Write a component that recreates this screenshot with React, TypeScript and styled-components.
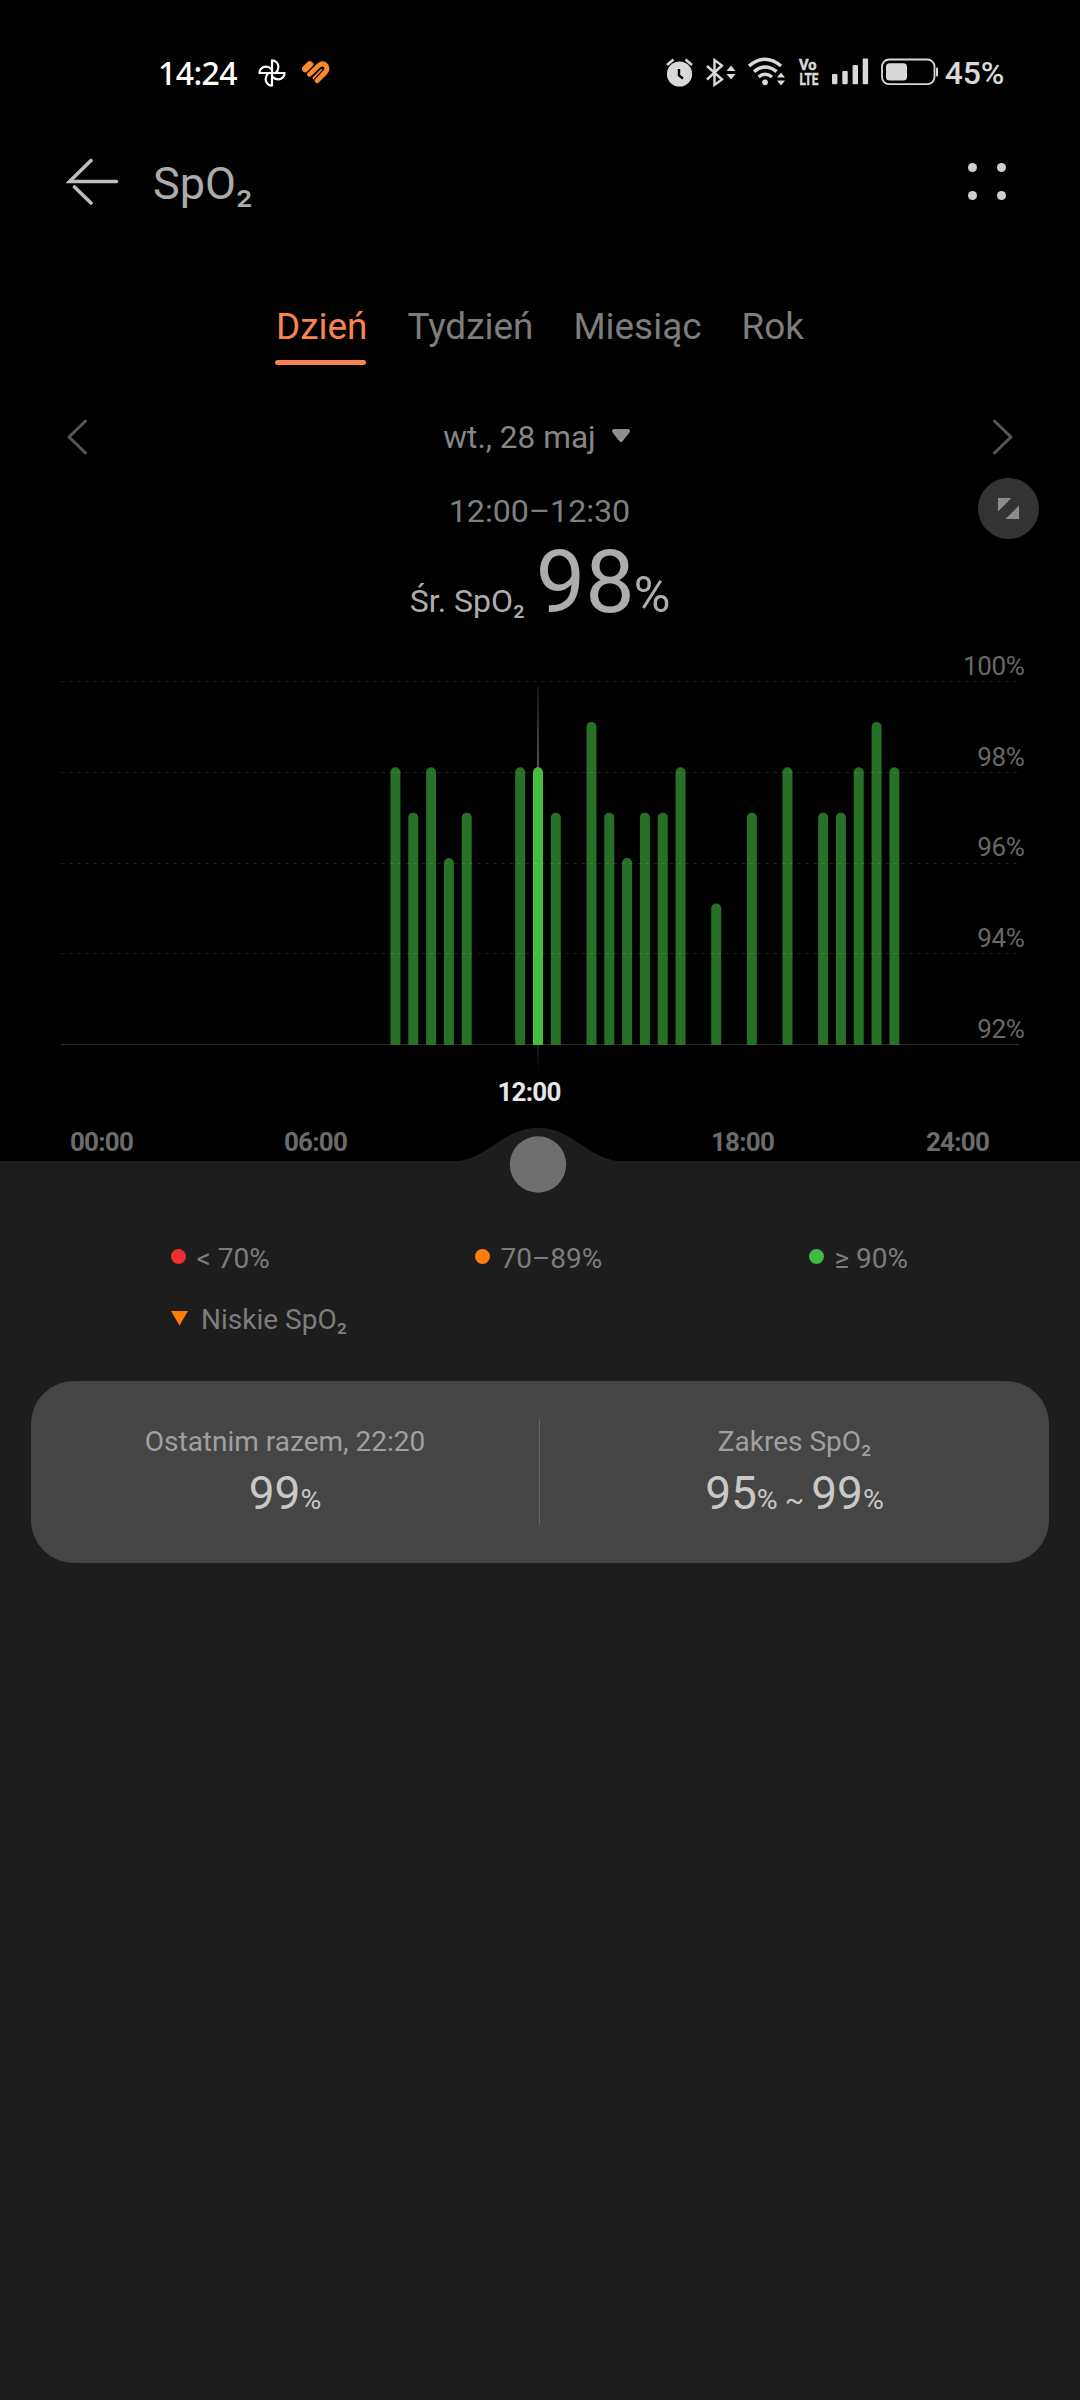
import React from "react";
import styled, { createGlobalStyle } from "styled-components";

const GlobalStyle = createGlobalStyle`
  html, body { margin: 0; background: #1d1d1d; }
  body { font-family: Roboto, "Noto Sans", sans-serif; }
`;

const Screen = styled.div`
  width: 1080px;
  height: 2400px;
  display: flex;
  flex-direction: column;
  background: #000;
  overflow: hidden;
`;

const StatusBar = styled.header`
  box-sizing: border-box;
  height: 98px;
  padding: 47px 76px 0 158px;
  display: flex;
  align-items: center;
  flex: none;
`;

const StatusText = styled.span<{ $color: string; $tight?: boolean }>`
  font-family: ${(p) => (p.$tight ? "Roboto" : '"Noto Sans"')}, sans-serif;
  font-size: 32px;
  font-weight: 500;
  letter-spacing: ${(p) => (p.$tight ? "-0.2px" : "-0.6px")};
  line-height: 48px;
  color: ${(p) => p.$color};
`;

const NoticeIcons = styled.div`
  display: flex;
  align-items: center;
  margin: 0 auto 0 21px;
`;

const SystemIcons = styled.svg`
  display: block;
  margin-right: 5px;
`;

const TitleBar = styled.div`
  box-sizing: border-box;
  height: 168px;
  padding: 0 74px 0 66px;
  display: flex;
  align-items: center;
  flex: none;
`;

const Title = styled.h1`
  margin: 3px auto 0 33px;
  font-size: 45px;
  font-weight: 400;
  line-height: 60px;
  color: #ababab;
`;

const MenuDots = styled.div`
  display: grid;
  grid-template-columns: repeat(2, 9px);
  gap: 19px 20px;
  margin-bottom: 2px;
`;

const MenuDot = styled.i`
  width: 9px;
  height: 9px;
  border-radius: 50%;
  background: #cfcfcf;
`;

const Tabs = styled.nav`
  display: flex;
  gap: 40px;
  padding: 37px 0 0 276px;
  flex: none;
`;

const Tab = styled.span<{ $active?: boolean }>`
  position: relative;
  height: 62px;
  font-size: 36.9px;
  line-height: 48px;
  color: ${(p) => (p.$active ? "#fb8350" : "#7d7d7d")};
  &::after {
    content: "";
    display: ${(p) => (p.$active ? "block" : "none")};
    position: absolute;
    left: -1px;
    right: 1px;
    bottom: 0;
    height: 5px;
    border-radius: 3px;
    background: #fb8350;
  }
`;

const DateRow = styled.div`
  height: 40px;
  margin-top: 53px;
  padding: 0 64px;
  display: flex;
  align-items: center;
  justify-content: space-between;
  flex: none;
`;

const DateLabel = styled.div`
  display: flex;
  align-items: center;
  gap: 15px;
  padding-right: 6px;
  font-size: 31.6px;
  line-height: 40px;
  color: #868686;
`;

const Reading = styled.section`
  position: relative;
  height: 135px;
  padding-top: 33px;
  flex: none;
`;

const TimeRange = styled.div`
  text-align: center;
  padding-right: 1px;
  font-size: 32.2px;
  line-height: 40px;
  color: #7f7f7f;
`;

const ExpandButton = styled.div`
  position: absolute;
  top: 20px;
  right: 41px;
  width: 61px;
  height: 61px;
  border-radius: 50%;
  background: #333;
  display: grid;
  place-items: center;
`;

const Average = styled.div`
  margin-top: 7px;
  display: flex;
  align-items: baseline;
  justify-content: center;
  line-height: 88px;
  color: #adadad;
`;

const AverageLabel = styled.span`
  font-size: 32px;
  line-height: 40px;
  margin-right: 11px;
`;

const AverageValue = styled.span`
  font-size: 88px;
`;

const AverageUnit = styled.span`
  font-size: 50px;
  line-height: 60px;
  margin-left: -1px;
`;

const ChartArea = styled.section`
  position: relative;
  height: 535px;
  flex: none;
`;

const Handle = styled.svg`
  position: absolute;
  left: 440px;
  top: 494px;
  display: block;
`;

const Panel = styled.main`
  flex: 1;
  background: #1d1d1d;
  padding: 67px 31px 0;
`;

const Legend = styled.div`
  display: grid;
  grid-template-columns: 304px 334px auto;
  grid-auto-rows: 61px;
  padding-left: 140px;
`;

const LegendItem = styled.div<{ $gap: number }>`
  display: flex;
  align-items: center;
  gap: ${(p) => p.$gap}px;
  font-size: 28px;
  color: #7d7d7d;
`;

const Dot = styled.i<{ $color: string }>`
  width: 15px;
  height: 15px;
  margin-bottom: 4px;
  border-radius: 50%;
  background: ${(p) => p.$color};
`;

const Card = styled.section`
  box-sizing: border-box;
  height: 182px;
  margin-top: 31px;
  border-radius: 43px;
  background: #454545;
  display: grid;
  grid-template-columns: 508px 1px 1fr;
  align-items: center;
`;

const Divider = styled.div`
  height: 106px;
  background: #646464;
`;

const Stat = styled.div`
  display: flex;
  flex-direction: column;
  align-items: center;
  padding-top: 8px;
`;

const StatLabel = styled.div`
  font-size: 28px;
  line-height: 40px;
  color: #a0a0a0;
`;

const StatValue = styled.div`
  font-size: 46px;
  line-height: 62px;
  color: #c8c8c8;
  white-space: pre;
`;

const Small = styled.span`
  font-size: 28.5px;
`;

const PinwheelIcon = () => (
  <svg width="28" height="28" viewBox="-14 -14 28 28" fill="none" stroke="#fff" strokeWidth="2.2" strokeLinejoin="round">
    {[0, 90, 180, 270].map((angle) => (
      <path key={angle} transform={`rotate(${angle})`} d="M0 0V-12.6A6.4 6.4 0 0 1 6.4 -6.2Q6.4 -2.600 3.600 0" />
    ))}
  </svg>
);

const HeartIcon = () => (
  <svg width="28" height="24" viewBox="0 0 28 24" style={{ marginLeft: 16 }} fill="none" stroke="#f98a2e" strokeLinecap="round">
    <path d="M3.7 7.8L7.8 3.8" strokeWidth="7.2" />
    <path d="M7.6 13.2L17.2 4.2Q21 1.6 23.8 4.4Q26.2 7.6 23.6 11L15.2 19.6" strokeWidth="5" />
    <path d="M12.4 17L20 9.6" strokeWidth="3.6" />
    <path d="M3.8 12.8L12.8 3.6M9.6 16.2L18.2 7.6Q20.4 6.4 21.2 8.6L12.6 18.2" stroke="#000" strokeWidth="1.2" />
  </svg>
);

const StatusIcons = () => (
  <SystemIcons width="276" height="34" viewBox="664 56 276 34" fill="#d9d9d9">
    <circle cx="679.5" cy="74" r="12.6" />
    <path d="M667 65L673.5 59.5M692 65L685.5 59.5" stroke="#d9d9d9" strokeWidth="2.6" />
    <path d="M679 69V75.5L683 78.5" stroke="#000" strokeWidth="2.4" fill="none" />
    <path d="M707 66L722 79.5L714.5 85V60L722 65.5L707 79.5" fill="none" stroke="#d9d9d9" strokeWidth="2.4" />
    <path d="M726.5 71L731 65.5L735.5 71ZM726.5 74L731 79.5L735.5 74Z" />
    <g fill="none" stroke="#d9d9d9" strokeWidth="3.4">
      <path d="M749 66Q765 52.5 781 66" />
      <path d="M754 71.6Q765 62.5 776.5 71.6" />
      <path d="M758.7 77Q765 71.4 772 77" />
    </g>
    <circle cx="765" cy="82.3" r="2.9" />
    <path d="M777 77.6L781 72.5L785 77.6ZM777 80.4L781 85.5L785 80.4Z" />
    <g fontWeight="700" stroke="#d9d9d9" strokeWidth="0.5">
      <text x="799" y="70.3" fontSize="15" textLength="17.5" lengthAdjust="spacingAndGlyphs">Vo</text>
      <text x="799.5" y="85" fontSize="16.5" textLength="19" lengthAdjust="spacingAndGlyphs">LTE</text>
    </g>
    <rect x="832" y="74" width="5.4" height="10.3" rx="1" />
    <rect x="842.3" y="71" width="5.4" height="13.3" rx="1" />
    <rect x="852.6" y="65" width="5.4" height="19.3" rx="1" />
    <rect x="862.7" y="58.5" width="5.4" height="25.8" rx="1" />
    <rect x="882" y="59.5" width="52.5" height="24.6" rx="7" fill="none" stroke="#d9d9d9" strokeWidth="1.8" />
    <rect x="886" y="63.2" width="21" height="17.4" rx="3.6" />
    <rect x="936" y="67.5" width="2" height="9" rx="1" />
  </SystemIcons>
);

/* [half-hour slot, SpO2 percentage] */
const samples: [number, number][] = [
  [16, 98], [17, 97], [18, 98], [19, 96], [20, 97],
  [23, 98], [24, 98], [25, 97], [27, 99], [28, 97],
  [29, 96], [30, 97], [31, 97], [32, 98], [34, 95],
  [36, 97], [38, 98], [40, 97], [41, 97], [42, 98],
  [43, 99], [44, 98],
];
const SELECTED = 24;
const BASE = 418.5;
const slotX = (slot: number) => 538 + (slot - SELECTED) * 17.82;
const levelY = (v: number) => BASE - (v - 92) * 45.375;

const Chart = () => (
  <svg width="1080" height="535" viewBox="0 0 1080 535" fontFamily="Roboto, sans-serif" fontSize="26">
    <defs>
      <linearGradient id="cursorTop" x1="0" y1="0" x2="0" y2="1">
        <stop offset="0" stopColor="#555" stopOpacity="0.2" />
        <stop offset="1" stopColor="#555" />
      </linearGradient>
      <linearGradient id="cursorBottom" x1="0" y1="0" x2="0" y2="1">
        <stop offset="0" stopColor="#3a3a3a" />
        <stop offset="1" stopColor="#3a3a3a" stopOpacity="0" />
      </linearGradient>
    </defs>
    <path d={`M61 ${BASE}H1019`} stroke="#2b2b2b" strokeWidth="1" />
    <rect x="537" y="60" width="2" height="84" fill="url(#cursorTop)" />
    <rect x="537.5" y="419" width="1" height="28" fill="url(#cursorBottom)" />
    {samples.map(([slot, v]) => {
      const x = slotX(slot);
      const top = levelY(v) - 5;
      return (
        <path
          key={slot}
          d={`M${x - 5} ${BASE + 0.5}V${top + 5}a5 5 0 0 1 10 0V${BASE + 0.5}Z`}
          fill={slot === SELECTED ? "#45bd41" : "#267126"}
        />
      );
    })}
    {[94, 96, 98, 100].map((v) => (
      <path
        key={v}
        d={`M61 ${Math.floor(levelY(v)) + 0.5}H1019`}
        stroke="#fff"
        strokeOpacity="0.11"
        strokeDasharray="4 4"
      />
    ))}
    <g fill="#686868" textAnchor="end" letterSpacing="-0.35">
      {[100, 98, 96, 94, 92].map((v) => (
        <text key={v} x="1024.500" y={levelY(v) - 6.7}>{`${v}%`}</text>
      ))}
    </g>
    <g fontWeight="700" fill="#6b6b6b" textAnchor="middle" letterSpacing="-0.8">
      <text x="529" y="475" fill="#e6e6e6">12:00</text>
      <text x="101.500" y="524.6">00:00</text>
      <text x="315.500" y="524.6">06:00</text>
      <text x="742.500" y="524.6">18:00</text>
      <text x="957.500" y="524.6">24:00</text>
    </g>
  </svg>
);

export default function App() {
  return (
    <>
      <GlobalStyle />
      <Screen>
        <StatusBar>
          <StatusText $color="#fff">14:24</StatusText>
          <NoticeIcons>
            <PinwheelIcon />
            <HeartIcon />
          </NoticeIcons>
          <StatusIcons />
          <StatusText $color="#d9d9d9" $tight>45%</StatusText>
        </StatusBar>
        <TitleBar>
          <svg width="54" height="48" viewBox="66 158 54 48" fill="none" stroke="#bdbdbd" strokeWidth="3.6" strokeLinecap="round">
            <path d="M91 160.500L69.500 181.500H116.500M74.500 187L91 203" />
          </svg>
          <Title>SpO₂</Title>
          <MenuDots>
            <MenuDot /><MenuDot /><MenuDot /><MenuDot />
          </MenuDots>
        </TitleBar>
        <Tabs>
          <Tab $active>Dzień</Tab>
          <Tab>Tydzień</Tab>
          <Tab>Miesiąc</Tab>
          <Tab>Rok</Tab>
        </Tabs>
        <DateRow>
          <svg width="26" height="38" viewBox="0 0 26 38" fill="none" stroke="#565656" strokeWidth="3" strokeLinecap="round" strokeLinejoin="round">
            <path d="M21.500 2L5 18L21.500 34" />
          </svg>
          <DateLabel>
            wt., 28 maj
            <svg width="20" height="20" viewBox="0 0 20 20" fill="#8f8f8f" stroke="#8f8f8f" strokeWidth="4" strokeLinejoin="round">
              <path d="M3 3H17L10 12Z" />
            </svg>
          </DateLabel>
          <svg width="26" height="38" viewBox="0 0 26 38" fill="none" stroke="#565656" strokeWidth="3" strokeLinecap="round" strokeLinejoin="round">
            <path d="M4.500 2L21 18L4.500 34" />
          </svg>
        </DateRow>
        <Reading>
          <TimeRange>12:00–12:30</TimeRange>
          <ExpandButton>
            <svg width="21" height="21" viewBox="0 0 21 21" fill="#8c8c8c">
              <path d="M0 0H13.500L0 13.500ZM21 7.500V21H7.500Z" />
            </svg>
          </ExpandButton>
          <Average>
            <AverageLabel>Śr. SpO₂</AverageLabel>
            <AverageValue>98</AverageValue>
            <AverageUnit>%</AverageUnit>
          </Average>
        </Reading>
        <ChartArea>
          <Chart />
          <Handle width="196" height="80" viewBox="440 1120 196 80">
            <path d="M452 1161.500C488 1161 502 1127.700 538 1127.700S588 1161 624 1161.500Z" fill="#1d1d1d" />
            <circle cx="538" cy="1164.500" r="28.200" fill="#6f6f6f" />
          </Handle>
        </ChartArea>
        <Panel>
          <Legend>
            <LegendItem $gap={10.5}><Dot $color="#ee2d30" />&lt; 70%</LegendItem>
            <LegendItem $gap={10.5}><Dot $color="#ff7d0a" />70–89%</LegendItem>
            <LegendItem $gap={10.5}><Dot $color="#41ba41" />≥ 90%</LegendItem>
            <LegendItem $gap={13}>
              <svg width="17" height="17" viewBox="0 0 17 17" fill="#ff7d0a"><path d="M0 0H17L8.500 14.500Z" /></svg>
              Niskie SpO₂
            </LegendItem>
          </Legend>
          <Card>
            <Stat>
              <StatLabel>Ostatnim razem, 22:20</StatLabel>
              <StatValue>99<Small>%</Small></StatValue>
            </Stat>
            <Divider />
            <Stat>
              <StatLabel>Zakres SpO₂</StatLabel>
              <StatValue>95<Small>% ~ </Small>99<Small>%</Small></StatValue>
            </Stat>
          </Card>
        </Panel>
      </Screen>
    </>
  );
}
